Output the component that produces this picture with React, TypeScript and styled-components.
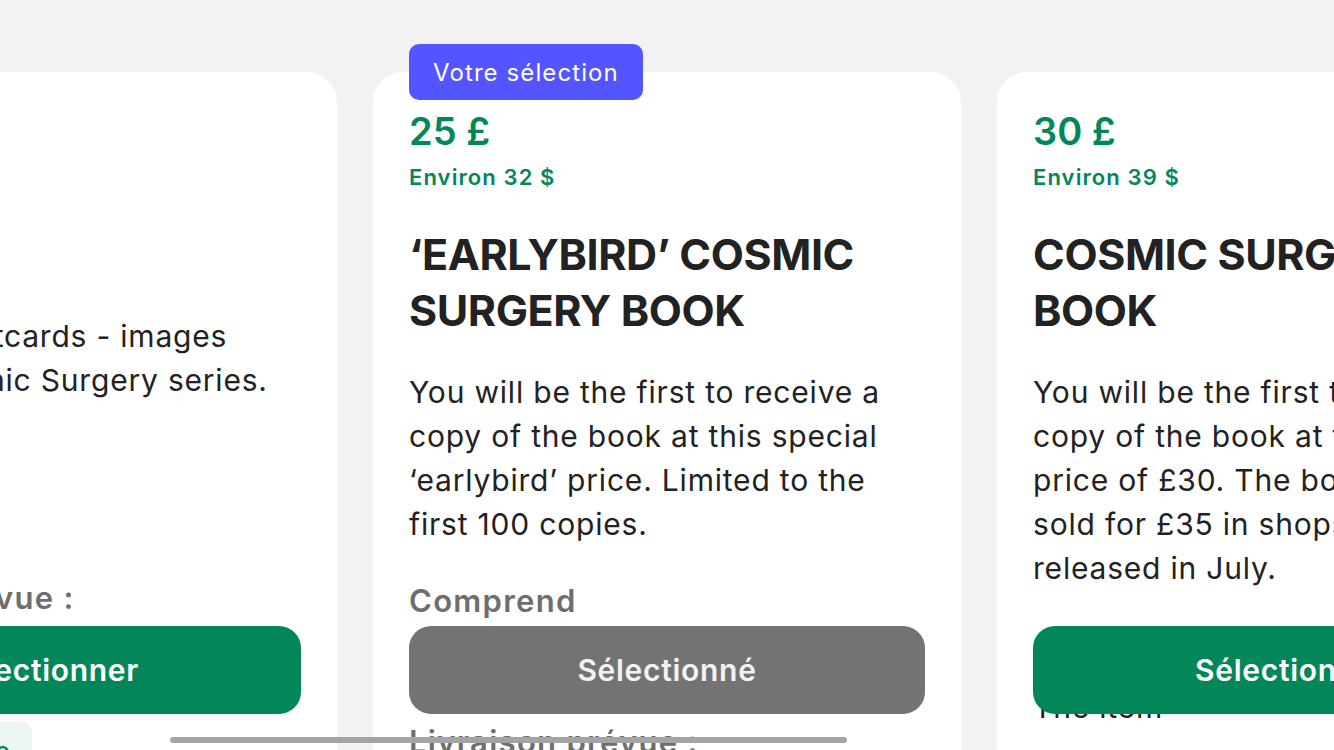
import React from 'react';
import styled, { createGlobalStyle } from 'styled-components';

type Reward = {
  id: string;
  price: string;
  approx: string;
  title: string;
  description: string;
  includes: string[];
  delivery: string;
  shipping: string;
  selected?: boolean;
};

const rewards: Reward[] = [
  {
    id: 'postcards',
    price: '10 £',
    approx: 'Environ 13 $',
    title: 'CARDS',
    description: 'A set of 8 postcards - images from the Cosmic Surgery series.',
    includes: ['Postcards'],
    delivery: 'juillet 2023',
    shipping: 'Livraison offerte',
  },
  {
    id: 'earlybird',
    price: '25 £',
    approx: 'Environ 32 $',
    title: '‘EARLYBIRD’ COSMIC SURGERY BOOK',
    description:
      'You will be the first to receive a copy of the book at this special ‘earlybird’ price. Limited to the first 100 copies.',
    includes: ['The item'],
    delivery: 'juillet 2023',
    shipping: 'Livraison offerte',
    selected: true,
  },
  {
    id: 'book',
    price: '30 £',
    approx: 'Environ 39 $',
    title: 'COSMIC SURGERY BOOK',
    description:
      'You will be the first to receive a copy of the book at the special price of £30. The book will be sold for £35 in shops when it is released in July.',
    includes: ['The item'],
    delivery: 'juillet 2023',
    shipping: 'Livraison offerte',
  },
];

const GlobalStyle = createGlobalStyle`
  html, body {
    margin: 0;
    padding: 0;
    height: 750px;
    overflow: hidden;
    background: #f2f2f2;
  }
  body {
    font-family: Inter, "Noto Sans", "Liberation Sans", sans-serif;
    -webkit-font-smoothing: antialiased;
  }
`;

const Screen = styled.div`
  position: relative;
  width: 1334px;
  height: 750px;
  overflow: hidden;
  background: #f2f2f2;
`;

// carrousel déjà défilé : la première carte est coupée à gauche
const Track = styled.div`
  display: flex;
  gap: 36px;
  padding-top: 72px;
  margin-left: -251px;
`;

const Card = styled.article`
  position: relative;
  flex: 0 0 588px;
  box-sizing: border-box;
  min-height: 900px;
  padding: 36px 36px 0;
  background: #fff;
  border-radius: 30px;
  display: flex;
  flex-direction: column;
`;

const Badge = styled.span`
  position: absolute;
  top: -28px;
  left: 36px;
  height: 56px;
  padding: 0 24px;
  display: flex;
  align-items: center;
  background: #5555ff;
  color: #fff;
  font-size: 24px;
  letter-spacing: 1.1px;
  border-radius: 10px;
`;

const Price = styled.div`
  font-size: 38px;
  line-height: 46px;
  font-weight: 600;
  color: #038759;
`;

const Approx = styled.div`
  margin-top: 8px;
  font-size: 22px;
  line-height: 30px;
  font-weight: 600;
  letter-spacing: 1.1px;
  color: #038759;
`;

const Title = styled.h2`
  margin: 34px 0 0;
  font-size: 43px;
  line-height: 56px;
  font-weight: 700;
  letter-spacing: -0.4px;
  color: #222;
`;

const Description = styled.p`
  margin: 32px 0 0;
  font-size: 30px;
  line-height: 44px;
  letter-spacing: 0.8px;
  color: #222;
`;

const Label = styled.div<{ $gap: number }>`
  margin-top: ${(p) => p.$gap}px;
  font-size: 31px;
  line-height: 40px;
  font-weight: 600;
  letter-spacing: 1.3px;
  color: #6e6e6e;
`;

const Item = styled.div`
  margin-top: 20px;
  font-size: 30px;
  line-height: 44px;
  letter-spacing: 0.8px;
  color: #222;
`;

const Chip = styled.span`
  align-self: flex-start;
  margin-top: 40px;
  padding: 14px 22px;
  font-size: 26px;
  line-height: 32px;
  font-weight: 500;
  color: #038759;
  background: #edf6f2;
  border-radius: 10px;
`;

const ActionButton = styled.button<{ $selected?: boolean }>`
  position: absolute;
  top: 554px;
  left: 36px;
  right: 36px;
  height: 88px;
  border: 0;
  border-radius: 22px;
  background: ${(p) => (p.$selected ? '#737373' : '#038759')};
  color: ${(p) => (p.$selected ? '#f2f2f2' : '#fff')};
  font-family: inherit;
  font-size: 30px;
  font-weight: 600;
  letter-spacing: 0.7px;
`;

const ScrollIndicator = styled.div`
  position: absolute;
  left: 170px;
  top: 737px;
  width: 677px;
  height: 6px;
  border-radius: 3px;
  background: #a4a4a4;
`;

const RewardCard: React.FC<{ reward: Reward }> = ({ reward }) => (
  <Card>
    {reward.selected && <Badge>Votre sélection</Badge>}
    <Price>{reward.price}</Price>
    <Approx>{reward.approx}</Approx>
    <Title>{reward.title}</Title>
    <Description>{reward.description}</Description>
    <Label $gap={35}>Comprend</Label>
    {reward.includes.map((item) => (
      <Item key={item}>{item}</Item>
    ))}
    <Label $gap={37}>Livraison prévue :</Label>
    <Item>{reward.delivery}</Item>
    <Chip>{reward.shipping}</Chip>
    <ActionButton $selected={reward.selected}>
      {reward.selected ? 'Sélectionné' : 'Sélectionner'}
    </ActionButton>
  </Card>
);

const App: React.FC = () => (
  <>
    <GlobalStyle />
    <Screen>
      <Track>
        {rewards.map((reward) => (
          <RewardCard key={reward.id} reward={reward} />
        ))}
      </Track>
      <ScrollIndicator />
    </Screen>
  </>
);

export default App;
